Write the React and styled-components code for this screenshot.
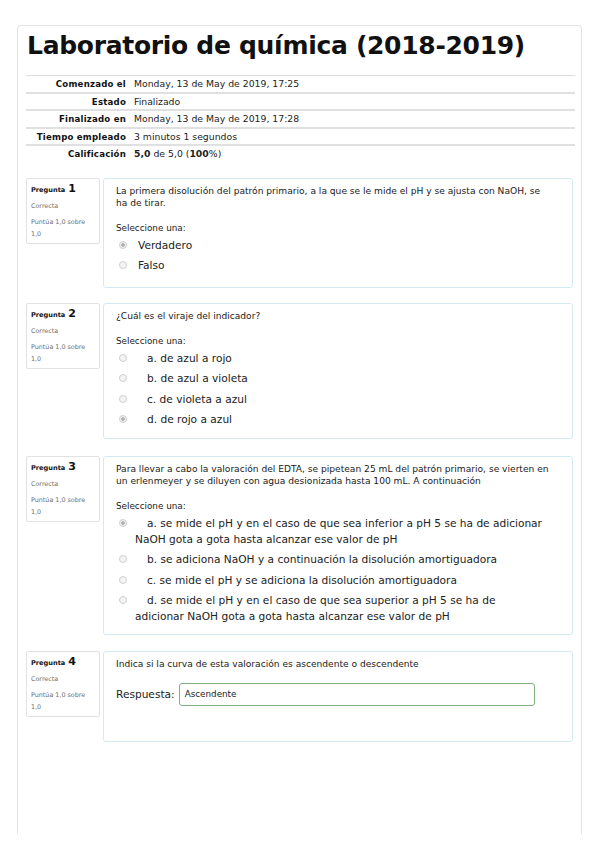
import React from 'react';
import styled, { createGlobalStyle } from 'styled-components';

const GlobalStyle = createGlobalStyle`
  html, body {
    margin: 0;
    padding: 0;
    background: #fff;
  }
  body {
    font-family: 'DejaVu Sans', Verdana, sans-serif;
    color: #222;
  }
`;

const Sheet = styled.div`
  box-sizing: border-box;
  margin: 25px 0 0 17px;
  width: 565px;
  height: 809px;
  border: 1px solid #e4e4e4;
  border-bottom: none;
  border-radius: 4px 4px 0 0;
  padding: 0 8px;
`;

const Title = styled.h1`
  margin: 0;
  padding: 3px 0 0 1px;
  height: 46px;
  font-family: 'DejaVu Sans', sans-serif;
  font-weight: bold;
  font-size: 25px;
  letter-spacing: -0.3px;
  color: #111;
  line-height: 34px;
  white-space: nowrap;
`;

const Summary = styled.table`
  width: 549px;
  border-collapse: collapse;
  margin: 0 0 16px 0;
  font-size: 8.6px;
  line-height: 10px;
`;

const Row = styled.tr`
  border-top: ${p => (p.first ? '1px solid #dedede' : '2px solid #e0e0e0')};
`;

const Label = styled.th`
  width: 100px;
  text-align: right;
  font-weight: bold;
  padding: 3px 7px 2.5px 0;
  height: 10px;
  white-space: nowrap;
  color: #111;
  letter-spacing: 0.2px;
`;

const Value = styled.td`
  padding: 3px 0 2.5px 1px;
  color: #222;
  font-family: 'DejaVu Sans', sans-serif;
  font-size: 9.3px;
`;

const Question = styled.div`
  display: flex;
  gap: 3px;
  margin-bottom: ${p => p.gap}px;
`;

const Info = styled.div`
  box-sizing: border-box;
  width: 74px;
  height: 66px;
  flex-shrink: 0;
  border: 1px solid #e2e2e2;
  border-radius: 2px;
  padding: 4px 4px;
  font-size: 6.4px;
  color: #707070;
  line-height: 12px;
`;

const QNum = styled.div`
  color: #111;
  font-weight: bold;
  font-size: 6.6px;
  margin-bottom: 4px;

  span {
    font-size: 11px;
    margin-left: 3px;
  }
`;

const InfoLine = styled.div`
  margin-bottom: 4px;
`;

const Content = styled.div`
  box-sizing: border-box;
  flex: 1;
  height: ${p => p.h}px;
  border: 1px solid #d4eaf2;
  border-radius: 3px;
  padding: 6px 12px;
`;

const QText = styled.div`
  font-size: 9.1px;
  line-height: 12px;
  color: #1a1a1a;
  padding-right: 10px;
  margin-bottom: 13px;
`;

const Prompt = styled.div`
  font-size: 8.8px;
  line-height: 12px;
  color: #1a1a1a;
  margin-bottom: 1px;
`;

const Option = styled.div`
  font-size: 10.6px;
  line-height: 16px;
  color: #222;
  padding: 2px 14px 2.5px 19px;
  text-indent: -16px;
`;

const Radio = styled.span`
  display: inline-block;
  box-sizing: border-box;
  width: 8px;
  height: 8px;
  border-radius: 50%;
  border: 1px solid #cfcfcf;
  background: ${p => (p.checked ? 'radial-gradient(circle, #b5b5b5 0 1.6px, #f2f2f2 2px)' : '#f4f4f4')};
  margin-right: ${p => (p.wide ? 20 : 11)}px;
  text-indent: 0;
`;

const AnswerRow = styled.div`
  display: flex;
  align-items: center;
  gap: 4px;
  margin-top: 8px;
  font-size: 10.6px;
  color: #222;
`;

const AnswerBox = styled.div`
  box-sizing: border-box;
  width: 356px;
  height: 23px;
  border: 1px solid #7fae7f;
  border-radius: 3px;
  padding: 0 5px;
  display: flex;
  align-items: center;
  font-size: 8.8px;
  color: #222;
`;

const summary = [
  ['Comenzado el', 'Monday, 13 de May de 2019, 17:25'],
  ['Estado', 'Finalizado'],
  ['Finalizado en', 'Monday, 13 de May de 2019, 17:28'],
  ['Tiempo empleado', '3 minutos 1 segundos'],
  ['Calificación', <><b>5,0</b> de 5,0 (<b>100</b>%)</>],
];

const questions = [
  {
    n: 1, h: 110, gap: 15,
    text: 'La primera disolución del patrón primario, a la que se le mide el pH y se ajusta con NaOH, se ha de tirar.',
    wide: false,
    options: [['Verdadero', true], ['Falso', false]],
  },
  {
    n: 2, h: 136, gap: 17,
    text: '¿Cuál es el viraje del indicador?',
    wide: true,
    options: [
      ['a. de azul a rojo', false],
      ['b. de azul a violeta', false],
      ['c. de violeta a azul', false],
      ['d. de rojo a azul', true],
    ],
  },
  {
    n: 3, h: 179, gap: 16,
    text: 'Para llevar a cabo la valoración del EDTA, se pipetean 25 mL del patrón primario, se vierten en un erlenmeyer y se diluyen con agua desionizada hasta 100 mL. A continuación',
    wide: true,
    options: [
      ['a. se mide el pH y en el caso de que sea inferior a pH 5 se ha de adicionar NaOH gota a gota hasta alcanzar ese valor de pH', true],
      ['b. se adiciona NaOH y a continuación la disolución amortiguadora', false],
      ['c. se mide el pH y se adiciona la disolución amortiguadora', false],
      ['d. se mide el pH y en el caso de que sea superior a pH 5 se ha de adicionar NaOH gota a gota hasta alcanzar ese valor de pH', false],
    ],
  },
];

function QuestionInfo({ n }) {
  return (
    <Info>
      <QNum>Pregunta<span>{n}</span></QNum>
      <InfoLine>Correcta</InfoLine>
      <div>Puntúa 1,0 sobre 1,0</div>
    </Info>
  );
}

export default function App() {
  return (
    <>
      <GlobalStyle />
      <Sheet>
        <Title>Laboratorio de química (2018-2019)</Title>
        <Summary>
          <tbody>
            {summary.map(([k, v], i) => (
              <Row key={k} first={i === 0}>
                <Label>{k}</Label>
                <Value>{v}</Value>
              </Row>
            ))}
          </tbody>
        </Summary>

        {questions.map(q => (
          <Question key={q.n} gap={q.gap}>
            <QuestionInfo n={q.n} />
            <Content h={q.h}>
              <QText>{q.text}</QText>
              <Prompt>Seleccione una:</Prompt>
              {q.options.map(([label, checked]) => (
                <Option key={label}>
                  <Radio checked={checked} wide={q.wide} />
                  {label}
                </Option>
              ))}
            </Content>
          </Question>
        ))}

        <Question gap={0}>
          <QuestionInfo n={4} />
          <Content h={91}>
            <QText>Indica si la curva de esta valoración es ascendente o descendente</QText>
            <AnswerRow>
              Respuesta:
              <AnswerBox>Ascendente</AnswerBox>
            </AnswerRow>
          </Content>
        </Question>
      </Sheet>
    </>
  );
}
